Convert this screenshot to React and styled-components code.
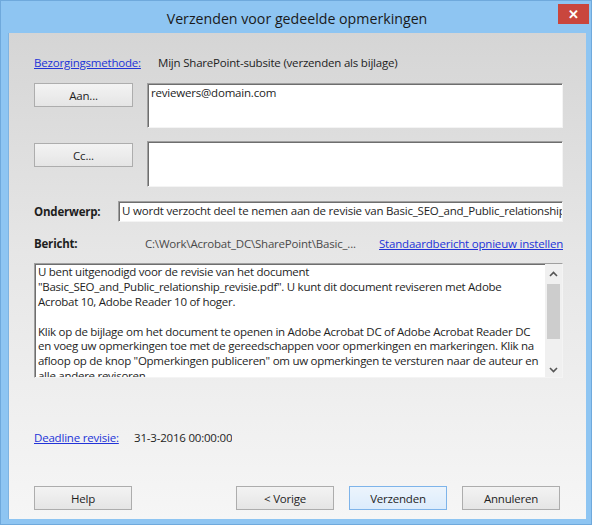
import React from 'react'
import styled, { createGlobalStyle } from 'styled-components'

const GlobalStyle = createGlobalStyle`
  html, body {
    margin: 0;
    padding: 0;
    background: #ffffff;
  }
  body {
    font-family: "Open Sans", "Noto Sans", sans-serif;
    font-size: 11.5px;
    letter-spacing: -0.2px;
    color: #1e1e1e;
  }
`

const Window = styled.div`
  width: 592px;
  height: 525px;
  box-sizing: border-box;
  background: #8ec5f2;
  border: 1px solid #6fa9dc;
  padding: 0 5px 5px 7px;
  display: flex;
  flex-direction: column;
`

const TitleBar = styled.div`
  height: 32px;
  flex: none;
  display: grid;
  grid-template-columns: 1fr auto 1fr;
  align-items: start;
`

const Title = styled.div`
  grid-column: 2;
  padding-top: 8px;
  font-size: 14.2px;
  letter-spacing: 0;
  color: #1a1a1a;
`

const CloseButton = styled.div`
  grid-column: 3;
  justify-self: end;
  margin-top: 3px;
  margin-right: -3px;
  width: 31px;
  height: 20px;
  background: #c9463d;
  color: #ffffff;
  font-size: 13px;
  font-weight: bold;
  display: flex;
  align-items: center;
  justify-content: center;
`

const Content = styled.div`
  flex: 1;
  background: linear-gradient(#d5d5d5 0%, #e6e6e6 45%, #f6f6f6 100%);
  border-left: 1px solid #7fb3e0;
  padding: 0 23px 0 25px;
  display: flex;
  flex-direction: column;
`

const Row = styled.div`
  display: flex;
  align-items: ${p => p.$align || 'center'};
  margin-top: ${p => p.$top || 0}px;
  height: ${p => p.$height || 'auto'};
`

const Link = styled.span`
  color: #2233d8;
  text-decoration: underline;
  white-space: nowrap;
`

const Label = styled.span`
  width: ${p => p.$width}px;
  flex: none;
  font-weight: ${p => (p.$bold ? 700 : 400)};
  white-space: nowrap;
`

const Value = styled.span`
  color: ${p => (p.$muted ? '#4a4a4a' : '#1e1e1e')};
  white-space: nowrap;
  overflow: hidden;
`

const Button = styled.div`
  width: ${p => p.$width || 99}px;
  height: 24px;
  box-sizing: border-box;
  flex: none;
  border: 1px solid ${p => (p.$primary ? '#7eb4ea' : '#adadad')};
  background: ${p =>
    p.$primary
      ? 'linear-gradient(#ecf4fc, #dcecfc)'
      : 'linear-gradient(#f3f3f3, #e5e5e5)'};
  display: flex;
  align-items: center;
  justify-content: center;
  margin-top: ${p => p.$top || 0}px;
  color: #1e1e1e;
`

const Field = styled.div`
  flex: 1;
  height: ${p => p.$height}px;
  box-sizing: border-box;
  background: #ffffff;
  border-style: solid;
  border-width: 1px;
  border-color: #a0a0a0 #f4f4f4 #f4f4f4 #a0a0a0;
  box-shadow: inset 1px 1px 0 #6e6e6e;
  padding: 1px 3px;
  margin-left: ${p => p.$left || 0}px;
  white-space: nowrap;
  overflow: hidden;
`

const MessageBox = styled.div`
  margin-top: 11px;
  height: 115px;
  box-sizing: border-box;
  background: #ffffff;
  border-style: solid;
  border-width: 1px;
  border-color: #a0a0a0 #f4f4f4 #f4f4f4 #a0a0a0;
  box-shadow: inset 1px 1px 0 #6e6e6e;
  display: flex;
  overflow: hidden;
`

const MessageText = styled.div`
  flex: 1;
  padding: 1px 3px 0 3px;
  letter-spacing: -0.27px;
  overflow: hidden;
  white-space: nowrap;
`

const Line = styled.div`
  height: 14.9px;
  line-height: 14.9px;
`

const ScrollBar = styled.div`
  width: 17px;
  flex: none;
  background: #f0f0f0;
  display: flex;
  flex-direction: column;
  align-items: center;
  padding-top: 2px;
`

const Arrow = styled.div`
  height: 15px;
  display: flex;
  align-items: center;
  justify-content: center;
`

const Thumb = styled.div`
  width: 13px;
  height: 55px;
  background: #cdcdcd;
  margin-top: 3px;
`

const Spacer = styled.div`
  flex: 1;
`

const Footer = styled.div`
  display: flex;
  margin-top: auto;
  margin-bottom: 9px;
  padding-right: 3px;
  gap: 15px;
`

const Chevron = ({ up }) => (
  <svg width="9" height="6" viewBox="0 0 9 6">
    <path
      d={up ? 'M1 5 L4.5 1.5 L8 5' : 'M1 1 L4.5 4.5 L8 1'}
      fill="none"
      stroke="#555"
      strokeWidth="1.6"
    />
  </svg>
)

const message = [
  'U bent uitgenodigd voor de revisie van het document',
  '"Basic_SEO_and_Public_relationship_revisie.pdf". U kunt dit document reviseren met Adobe',
  'Acrobat 10, Adobe Reader 10 of hoger.',
  '',
  'Klik op de bijlage om het document te openen in Adobe Acrobat DC of Adobe Acrobat Reader DC',
  'en voeg uw opmerkingen toe met de gereedschappen voor opmerkingen en markeringen. Klik na',
  'afloop op de knop "Opmerkingen publiceren" om uw opmerkingen te versturen naar de auteur en',
  'alle andere revisoren.'
]

export default function App() {
  return (
    <>
      <GlobalStyle />
      <Window>
        <TitleBar>
          <Title>Verzenden voor gedeelde opmerkingen</Title>
          <CloseButton>✕</CloseButton>
        </TitleBar>
        <Content>
          <Row $top={20} $height="18px">
            <Label $width={124}>
              <Link>Bezorgingsmethode:</Link>
            </Label>
            <Value>Mijn SharePoint-subsite (verzenden als bijlage)</Value>
          </Row>

          <Row $top={12} $align="flex-start">
            <Button>Aan...</Button>
            <Field $height={45} $left={14}>
              reviewers@domain.com
            </Field>
          </Row>

          <Row $top={13} $align="flex-start">
            <Button $top={2}>Cc...</Button>
            <Field $height={46} $left={14} />
          </Row>

          <Row $top={14}>
            <Label $width={84} $bold>
              Onderwerp:
            </Label>
            <Field $height={21}>
              U wordt verzocht deel te nemen aan de revisie van
              Basic_SEO_and_Public_relationship
            </Field>
          </Row>

          <Row $top={12} $height="18px">
            <Label $width={111} $bold>
              Bericht:
            </Label>
            <Value $muted>C:\Work\Acrobat_DC\SharePoint\Basic_...</Value>
            <Spacer />
            <Link>Standaardbericht opnieuw instellen</Link>
          </Row>

          <MessageBox>
            <MessageText>
              {message.map((line, i) => (
                <Line key={i}>{line}</Line>
              ))}
            </MessageText>
            <ScrollBar>
              <Arrow>
                <Chevron up />
              </Arrow>
              <Thumb />
              <Spacer />
              <Arrow>
                <Chevron />
              </Arrow>
            </ScrollBar>
          </MessageBox>

          <Row $top={50} $height="18px">
            <Label $width={100}>
              <Link>Deadline revisie:</Link>
            </Label>
            <Value>31-3-2016 00:00:00</Value>
          </Row>

          <Footer>
            <Button $width={98}>Help</Button>
            <Spacer />
            <Button $width={98}>&lt; Vorige</Button>
            <Button $width={98} $primary>
              Verzenden
            </Button>
            <Button $width={98}>Annuleren</Button>
          </Footer>
        </Content>
      </Window>
    </>
  )
}
